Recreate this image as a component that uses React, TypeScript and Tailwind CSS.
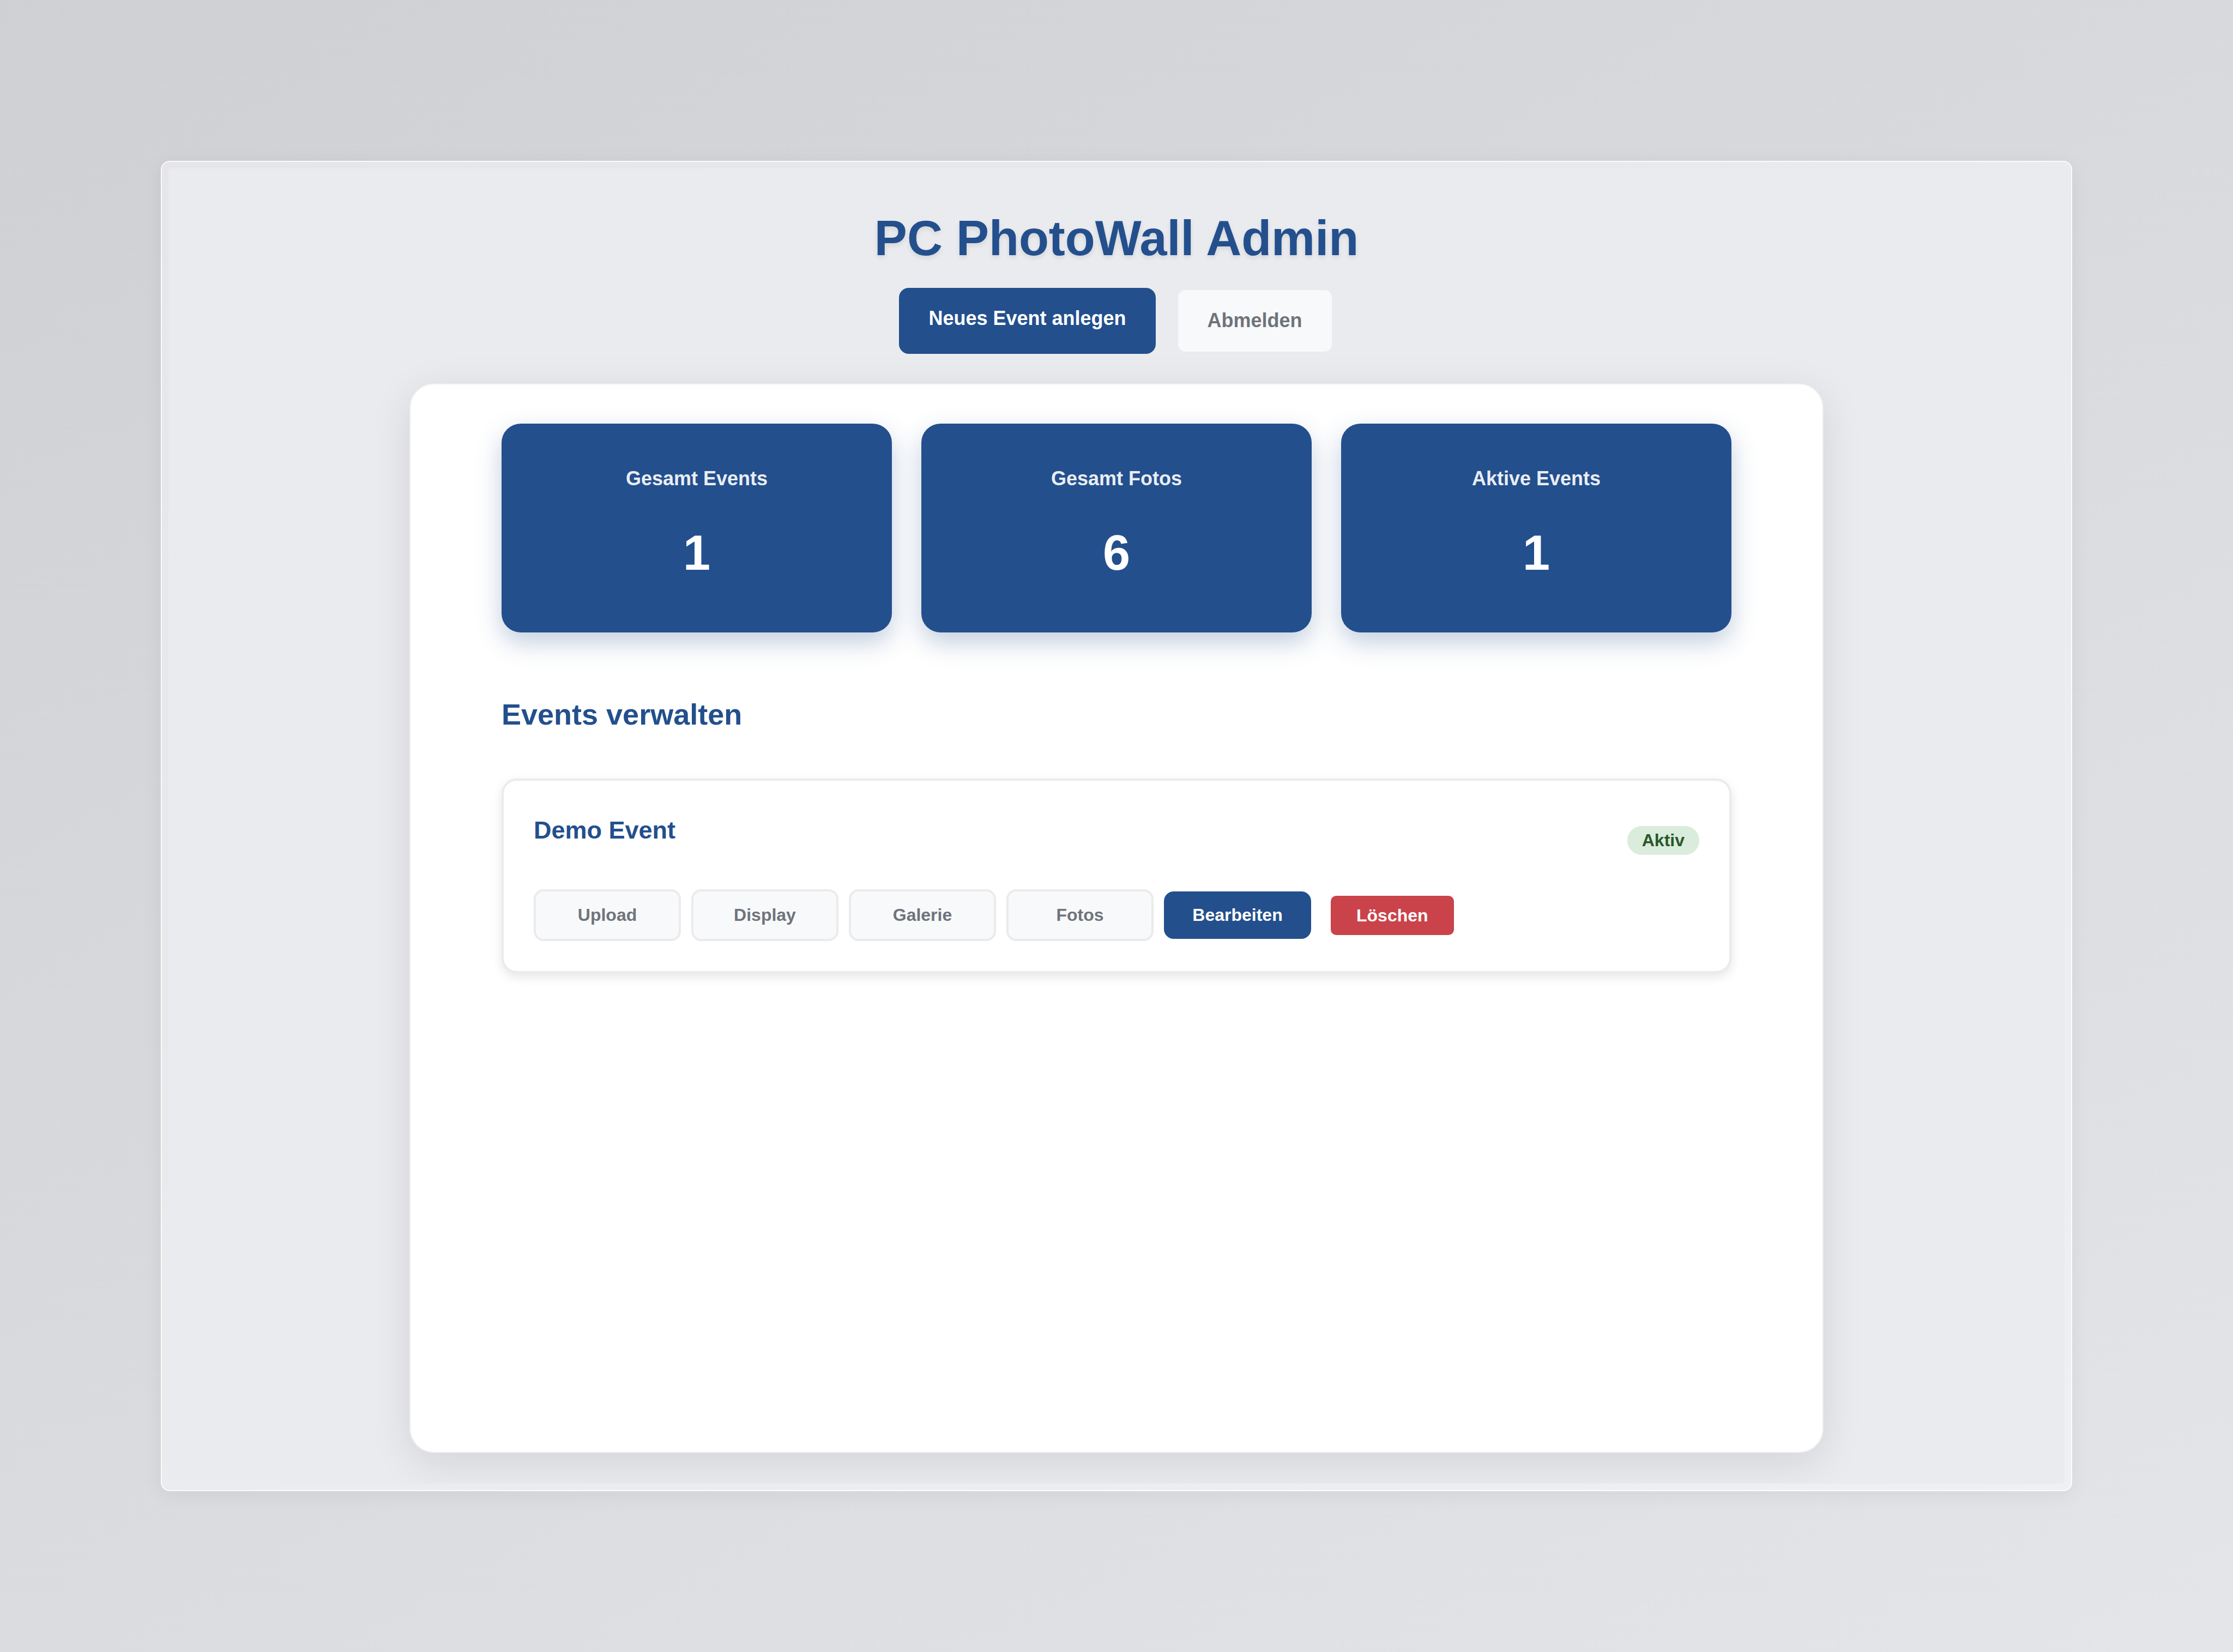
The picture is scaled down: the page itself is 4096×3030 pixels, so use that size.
const stats = [
  { label: 'Gesamt Events', value: 1 },
  { label: 'Gesamt Fotos', value: 6 },
  { label: 'Aktive Events', value: 1 },
];

const eventLinks = ['Upload', 'Display', 'Galerie', 'Fotos'];

const largeButton = 'rounded-[18px] px-[54px] pt-[29px] pb-[31px] text-[36px] leading-[53px] font-bold';
const smallButton = 'min-w-[270px] rounded-[18px] py-[18px] text-center text-[32px] leading-[51px] font-bold';

function StatCard({ label, value }: { label: string; value: number }) {
  return (
    <div className="rounded-[35px] bg-[#234f8d] p-[74px] text-center font-bold text-white shadow-[0_18px_46px_rgba(35,79,141,0.28)]">
      <h3 className="text-[36px] leading-[54px] text-[#e9edf4]">{label}</h3>
      <p className="mt-[37px] text-[90px] leading-[144px]">{value}</p>
    </div>
  );
}

function EventCard() {
  return (
    <article className="rounded-[28px] border-4 border-[#ebebed] bg-white p-[55px] shadow-[0_7px_19px_rgba(0,0,0,0.1)]">
      <div className="flex items-center justify-between">
        <h3 className="mb-[37px] text-[45px] leading-[72px] font-bold text-[#234f8d]">Demo Event</h3>
        <span className="rounded-full bg-[#daecdc] px-[27px] text-[32px] leading-[53px] font-bold text-[#295829]">Aktiv</span>
      </div>
      <div className="mt-[35px] flex flex-wrap items-center gap-[19px]">
        {eventLinks.map((name) => (
          <a key={name} href="#" className={`${smallButton} border-4 border-[#ebebee] bg-[#f8f9fb] px-[46px] text-[#6f747b]`}>
            {name}
          </a>
        ))}
        <a href="#" className={`${smallButton} bg-[#234f8d] px-[50px] text-white`}>
          Bearbeiten
        </a>
        <button type="button" className="ml-[17px] rounded-[10px] bg-[#ca434a] px-[47px] py-3 text-[32px] leading-[48px] font-bold text-white">
          Löschen
        </button>
      </div>
    </article>
  );
}

export default function App() {
  return (
    <div className="flex min-h-screen flex-col bg-[linear-gradient(150deg,#cfd0d4_0%,#e4e5e9_100%)] p-[295px] font-['Liberation_Sans',Arial,sans-serif]">
      <div className="flex flex-1 flex-col rounded-[16px] border-2 border-white/80 bg-white/45 p-3 shadow-[0_7px_37px_rgba(0,0,0,0.06)]">
        <main className="flex flex-1 flex-col overflow-hidden rounded-[5px] bg-[#eaebef] px-[54px] pt-[74px] pb-[56px]">
          <header className="flex flex-col items-center">
            <h1 className="text-[90px] leading-[108px] font-bold text-[#234f8d] [text-shadow:0_4px_8px_rgba(0,0,0,0.1)]">
              PC PhotoWall Admin
            </h1>
            <nav className="mt-[37px] flex gap-[37px]">
              <a href="#" className={`${largeButton} bg-[#234f8d] text-white`}>
                Neues Event anlegen
              </a>
              <a href="#" className={`${largeButton} border-4 border-[#eaebef] bg-[#f8f9fb] text-[#6f747b]`}>
                Abmelden
              </a>
            </nav>
          </header>
          <div className="mx-auto mt-[54px] w-full max-w-[2594px] flex-1 rounded-[45px] border-2 border-[#ededf0] bg-white px-[167px] py-[72px] shadow-[0_18px_74px_rgba(0,0,0,0.1)]">
            <section className="grid grid-cols-3 gap-[54px]">
              {stats.map((s) => (
                <StatCard key={s.label} label={s.label} value={s.value} />
              ))}
            </section>
            <section className="mt-[107px]">
              <h2 className="mb-[74px] text-[54px] leading-[87px] font-bold text-[#234f8d]">Events verwalten</h2>
              <EventCard />
            </section>
          </div>
        </main>
      </div>
    </div>
  );
}
